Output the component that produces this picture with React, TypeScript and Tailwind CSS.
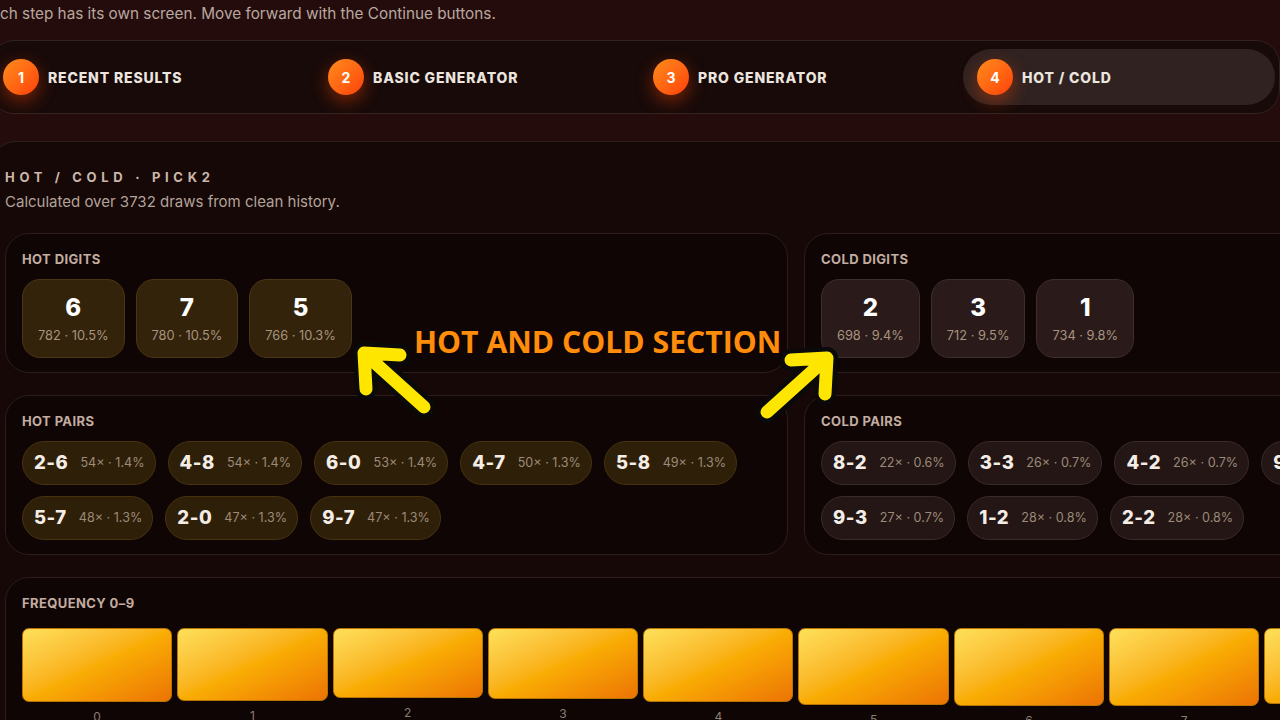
import React from "react";

type Digit = { d: string; count: number; pct: string };
type Pair = { p: string; count: number; pct: string };

const hotDigits: Digit[] = [
  { d: "6", count: 782, pct: "10.5%" },
  { d: "7", count: 780, pct: "10.5%" },
  { d: "5", count: 766, pct: "10.3%" },
];

const coldDigits: Digit[] = [
  { d: "2", count: 698, pct: "9.4%" },
  { d: "3", count: 712, pct: "9.5%" },
  { d: "1", count: 734, pct: "9.8%" },
];

const hotPairs: Pair[] = [
  { p: "2-6", count: 54, pct: "1.4%" },
  { p: "4-8", count: 54, pct: "1.4%" },
  { p: "6-0", count: 53, pct: "1.4%" },
  { p: "4-7", count: 50, pct: "1.3%" },
  { p: "5-8", count: 49, pct: "1.3%" },
  { p: "5-7", count: 48, pct: "1.3%" },
  { p: "2-0", count: 47, pct: "1.3%" },
  { p: "9-7", count: 47, pct: "1.3%" },
];

const coldPairs: Pair[] = [
  { p: "8-2", count: 22, pct: "0.6%" },
  { p: "3-3", count: 26, pct: "0.7%" },
  { p: "4-2", count: 26, pct: "0.7%" },
  { p: "9-0", count: 26, pct: "0.7%" },
  { p: "7-1", count: 27, pct: "0.7%" },
  { p: "9-3", count: 27, pct: "0.7%" },
  { p: "1-2", count: 28, pct: "0.8%" },
  { p: "2-2", count: 28, pct: "0.8%" },
];

const frequency = [740, 734, 698, 712, 736, 766, 782, 780, 760, 756];

const steps = [
  { n: 1, label: "Recent results", w: "w-[325px] pl-[4px]" },
  { n: 2, label: "Basic generator", w: "w-[325px] pl-[4px]" },
  { n: 3, label: "Pro generator", w: "w-[314px] pl-[4px]" },
];

function StepDot({ n }: { n: number }) {
  return (
    <span className="flex h-[36px] w-[36px] shrink-0 items-center justify-center rounded-full bg-linear-to-br from-[#ff8a1c] to-[#ff3c0a] text-[14px] font-bold text-white shadow-[0_6px_18px_rgba(255,70,0,0.45)]">
      {n}
    </span>
  );
}

function Panel({ title, children, className = "" }: { title: string; children: React.ReactNode; className?: string }) {
  return (
    <div className={`rounded-[24px] border border-[#2b1d1a] bg-[#0f0505] px-4 pt-4 ${className}`}>
      <div className="mb-[11px] text-[13px] font-bold uppercase leading-[18px] tracking-[0.03em] text-[#c2ada0]">{title}</div>
      {children}
    </div>
  );
}

function DigitTile({ item, hot }: { item: Digit; hot: boolean }) {
  return (
    <div
      className={`flex flex-col items-center rounded-[18px] border px-[15px] pt-[13px] pb-[13px] ${
        hot ? "border-[#4a3615] bg-[#33230b]" : "border-[#3d2d2b] bg-[#2a1b1a]"
      }`}
    >
      <span className="text-[24px] font-extrabold leading-[30px] text-white">{item.d}</span>
      <span className="mt-[5px] text-[12.8px] leading-[16px] text-[#a8937f]">
        {item.count} · {item.pct}
      </span>
    </div>
  );
}

function PairChip({ item, hot }: { item: Pair; hot: boolean }) {
  return (
    <div
      className={`flex h-[44px] items-center gap-[12px] rounded-full border pl-[11px] pr-[10px] ${
        hot ? "border-[#46320f] bg-[#2e1f08]" : "border-[#3a2a28] bg-[#231615]"
      }`}
    >
      <span className="text-[18.5px] font-extrabold tracking-[0.03em] text-[#f4ede6]">{item.p}</span>
      <span className="text-[12.6px] text-[#9d8a79]">
        {item.count}× · {item.pct}
      </span>
    </div>
  );
}

function Arrow({ flip }: { flip?: boolean }) {
  // arrow pointing up-left; mirrored for the up-right one
  const d = "M16 14 L52 16 M16 14 L18 50 M16 14 L76 68";
  return (
    <svg width="90" height="80" viewBox="0 0 90 80" className={flip ? "-scale-x-100" : ""}>
      <path d={d} stroke="#0a0a0a" strokeWidth="22" strokeLinecap="round" strokeLinejoin="round" fill="none" />
      <path d={d} stroke="#ffe600" strokeWidth="13" strokeLinecap="round" strokeLinejoin="round" fill="none" />
    </svg>
  );
}

export default function App() {
  return (
    <div className="relative h-[720px] w-full overflow-hidden bg-[#250c0c] text-white" style={{ fontFamily: "Inter, 'Noto Sans', sans-serif" }}>
      <p className="pt-[2px] text-[15.3px] leading-[24px] text-[#b8a79f]">
        ch step has its own screen. Move forward with the Continue buttons.
      </p>

      {/* step tabs */}
      <nav className="mt-[14px] -ml-[10px] flex w-[1290px] items-center rounded-[24px] border border-[#33221f] bg-[#170a09] py-[8px] pl-[8px] pr-[4px]">
        {steps.map((s) => (
          <div key={s.n} className={`flex h-[56px] items-center gap-[9px] ${s.w}`}>
            <StepDot n={s.n} />
            <span className="text-[14px] font-extrabold uppercase tracking-[0.06em] text-[#ece4df]">{s.label}</span>
          </div>
        ))}
        <div className="flex h-[56px] flex-1 items-center gap-[9px] rounded-full bg-[#2f2220] pl-[14px]">
          <StepDot n={4} />
          <span className="text-[14px] font-extrabold uppercase tracking-[0.06em] text-[#ece4df]">Hot / Cold</span>
        </div>
      </nav>

      {/* hot / cold card */}
      <section className="mt-[27px] -ml-[10px] w-[1612px] rounded-[26px] border border-[#2e1f1c] bg-[#150807] px-[14px] pt-[26px] pb-6">
        <div className="text-[13px] font-bold uppercase leading-[18px] tracking-[0.36em] text-[#ccb7a9]">Hot / Cold · Pick2</div>
        <p className="mt-[5px] text-[15px] leading-[22px] text-[#b4a39a]">Calculated over 3732 draws from clean history.</p>

        <div className="mt-[20px] grid grid-cols-2 gap-x-4 gap-y-[22px]">
          <Panel title="Hot digits" className="pb-[14px]">
            <div className="flex gap-[11px]">
              {hotDigits.map((d) => (
                <DigitTile key={d.d} item={d} hot />
              ))}
            </div>
          </Panel>
          <Panel title="Cold digits" className="pb-[14px]">
            <div className="flex gap-[11px]">
              {coldDigits.map((d) => (
                <DigitTile key={d.d} item={d} hot={false} />
              ))}
            </div>
          </Panel>
          <Panel title="Hot pairs" className="pb-[14px]">
            <div className="flex flex-wrap gap-x-[12px] gap-y-[11px]">
              {hotPairs.map((p) => (
                <PairChip key={p.p} item={p} hot />
              ))}
            </div>
          </Panel>
          <Panel title="Cold pairs" className="pb-[14px]">
            <div className="flex flex-wrap gap-x-[12px] gap-y-[11px]">
              {coldPairs.map((p) => (
                <PairChip key={p.p} item={p} hot={false} />
              ))}
            </div>
          </Panel>
        </div>

        <Panel title="Frequency 0–9" className="mt-[22px] pb-4">
          <div className="mt-[16px] flex items-start gap-[5px]">
            {frequency.map((c, i) => (
              <div key={i} className="flex flex-1 flex-col items-center">
                <div
                  className="w-full rounded-[7px] border border-[#b77400] bg-linear-to-br from-[#fde05a] via-[#f9ad04] to-[#ec7304]"
                  style={{ height: c / 10 }}
                />
                <span className="mt-[6px] text-[12px] text-[#8e7e72]">{i}</span>
              </div>
            ))}
          </div>
        </Panel>
      </section>

      {/* callout */}
      <div className="absolute left-[414px] top-[324px] text-[30.2px] font-bold leading-[36px] text-[#ff8c0a]" style={{ fontFamily: "'Open Sans', sans-serif" }}>
        HOT AND COLD SECTION
      </div>
      <div className="absolute left-[348px] top-[339px]">
        <Arrow />
      </div>
      <div className="absolute left-[753px] top-[344px]">
        <Arrow flip />
      </div>
    </div>
  );
}
